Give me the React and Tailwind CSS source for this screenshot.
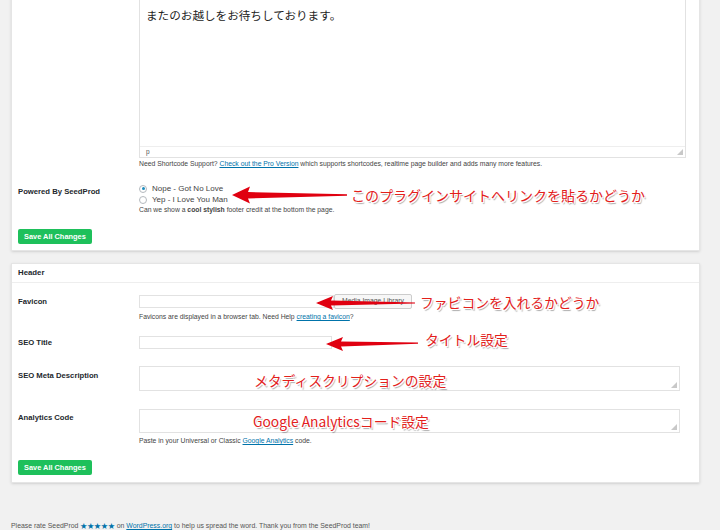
import React from 'react'

const sans = { fontFamily: '"Liberation Sans", Arial, "Noto Sans CJK JP", sans-serif' }
const jp = { fontFamily: '"Noto Sans CJK JP", "Noto Sans", sans-serif' }
const noteShadow = {
  ...jp,
  textShadow: '1px 1px 0 #fff, -1px -1px 0 #fff, 1px -1px 0 #fff, -1px 1px 0 #fff, 1.5px 1.5px 1px rgba(0,0,0,0.35)'
}

function Grip() {
  return (
    <svg width="6" height="6" viewBox="0 0 6 6" className="absolute bottom-[2px] right-[2px]">
      <path d="M6 0 L6 6 L0 6 Z" fill="#c8c8c8" />
    </svg>
  )
}

function SaveButton() {
  return (
    <div className="flex">
      <button className="h-[15px] px-[6px] rounded-[2px] bg-[#1ec05b] text-white text-[7.4px] font-bold leading-[15px]">
        Save All Changes
      </button>
    </div>
  )
}

function Label({ children, className = '' }) {
  return <div className={`text-[7.7px] font-bold text-[#23282d] ${className}`}>{children}</div>
}

function Help({ children, className = '' }) {
  return <div className={`text-[6.8px] leading-[9px] text-[#444] ${className}`}>{children}</div>
}

function Radio({ checked, children }) {
  return (
    <label className="flex items-center gap-[5px] h-[11px] text-[8px] text-[#444]">
      <span className="w-[8px] h-[8px] rounded-full border border-[#b4b9be] bg-white flex items-center justify-center">
        {checked && <span className="w-[3px] h-[3px] rounded-full bg-[#1e8cbe]" />}
      </span>
      {children}
    </label>
  )
}

export default function App() {
  return (
    <div className="relative w-[720px] h-[530px] overflow-hidden bg-[#f1f1f1]" style={sans}>
      <div className="pl-[11px] pr-[20px]">
        {/* Misc card */}
        <div className="-mt-[20px] bg-white border border-[#e5e5e5] shadow-sm pt-[10px] pb-[6px] pl-[6px] pr-[13px]">
          <div className="ml-[121px] relative h-[167px] border border-[#e2e2e2] flex flex-col">
            <div className="flex-1 px-[6px] pt-[14px] text-[11.6px] leading-[18px] text-[#222]" style={jp}>
              またのお越しをお待ちしております。
            </div>
            <div className="h-[11px] border-t border-[#eee] px-[6px] text-[6.5px] leading-[10px] text-[#555]">p</div>
            <Grip />
          </div>
          <Help className="ml-[121px] mt-[1px]">
            Need Shortcode Support? <span className="text-[#0073aa] underline">Check out the Pro Version</span> which supports shortcodes, realtime page builder and adds many more features.
          </Help>

          <div className="grid grid-cols-[121px_1fr] mt-[15px]">
            <Label className="pt-[3px] leading-[11px]">Powered By SeedProd</Label>
            <div>
              <Radio checked>Nope - Got No Love</Radio>
              <Radio>Yep - I Love You Man</Radio>
              <Help>
                Can we show a <b>cool stylish</b> footer credit at the bottom the page.
              </Help>
            </div>
          </div>

          <div className="mt-[15px]">
            <SaveButton />
          </div>
        </div>

        {/* Header card */}
        <div className="mt-[12px] bg-white border border-[#e5e5e5] shadow-sm">
          <div className="h-[19px] border-b border-[#eee] px-[6px] text-[7.8px] font-semibold leading-[18px] text-[#23282d]">
            Header
          </div>
          <div className="pl-[6px] pr-[19px] pb-[7px]">
            <div className="grid grid-cols-[121px_1fr] mt-[11px]">
              <Label className="leading-[15px]">Favicon</Label>
              <div>
                <div className="flex items-center">
                  <div className="w-[195px] h-[13px] border border-[#e2e2e2] bg-white" />
                  <button className="h-[15px] w-[78px] border border-[#ccc] bg-[#f7f7f7] rounded-[2px] text-[6.8px] text-[#555]">
                    Media Image Library
                  </button>
                </div>
                <Help className="mt-[3px]">
                  Favicons are displayed in a browser tab. Need Help <span className="text-[#0073aa] underline">creating a favicon</span>?
                </Help>
              </div>
            </div>

            <div className="grid grid-cols-[121px_1fr] mt-[15px]">
              <Label className="leading-[13px]">SEO Title</Label>
              <div className="w-[193px] h-[13px] border border-[#e2e2e2] bg-white" />
            </div>

            <div className="grid grid-cols-[121px_1fr] mt-[17px]">
              <Label className="pt-[3px] leading-[13px]">SEO Meta Description</Label>
              <div className="relative h-[25px] border border-[#e2e2e2] bg-white">
                <Grip />
              </div>
            </div>

            <div className="grid grid-cols-[121px_1fr] mt-[18px]">
              <Label className="pt-[2px] leading-[13px]">Analytics Code</Label>
              <div>
                <div className="relative h-[24px] border border-[#e2e2e2] bg-white">
                  <Grip />
                </div>
                <Help className="mt-[3px]">
                  Paste in your Universal or Classic <span className="text-[#0073aa] underline">Google Analytics</span> code.
                </Help>
              </div>
            </div>

            <div className="mt-[15px]">
              <SaveButton />
            </div>
          </div>
        </div>

        <div className="mt-[38px] text-[6.9px] leading-[9px] text-[#555] whitespace-nowrap">
          Please rate SeedProd <span className="text-[#0073aa]">★★★★★</span> on <span className="text-[#0073aa] underline">WordPress.org</span> to help us spread the word. Thank you from the SeedProd team!
        </div>
      </div>

      {/* annotations */}
      <svg className="absolute inset-0 pointer-events-none" width="720" height="530" viewBox="0 0 720 530">
        <polygon points="232,195 250,186.5 248,192 347,194.3 347,195.7 248,198.5 250,203.5" fill="#e00010" />
        <polygon points="316,303 333,296 331,300.5 415,302.4 415,303.6 331,305.5 333,310" fill="#e00010" />
        <polygon points="326,344 343,337 341,341.5 418,342.6 418,343.8 341,346.5 343,351" fill="#e00010" />
      </svg>
      <div className="absolute left-[351px] top-[185px] text-[14px] leading-[20px] text-[#e3201b] whitespace-nowrap" style={noteShadow}>
        このプラグインサイトへリンクを貼るかどうか
      </div>
      <div className="absolute left-[420px] top-[292px] text-[13.8px] leading-[20px] text-[#e3201b] whitespace-nowrap" style={noteShadow}>
        ファビコンを入れるかどうか
      </div>
      <div className="absolute left-[425px] top-[329px] text-[13.8px] leading-[20px] text-[#e3201b] whitespace-nowrap" style={noteShadow}>
        タイトル設定
      </div>
      <div className="absolute left-[254px] top-[370px] text-[13.8px] leading-[20px] text-[#e3201b] whitespace-nowrap" style={noteShadow}>
        メタディスクリプションの設定
      </div>
      <div className="absolute left-[253px] top-[411px] text-[13.8px] leading-[20px] text-[#e3201b] whitespace-nowrap" style={noteShadow}>
        Google Analyticsコード設定
      </div>
    </div>
  )
}
